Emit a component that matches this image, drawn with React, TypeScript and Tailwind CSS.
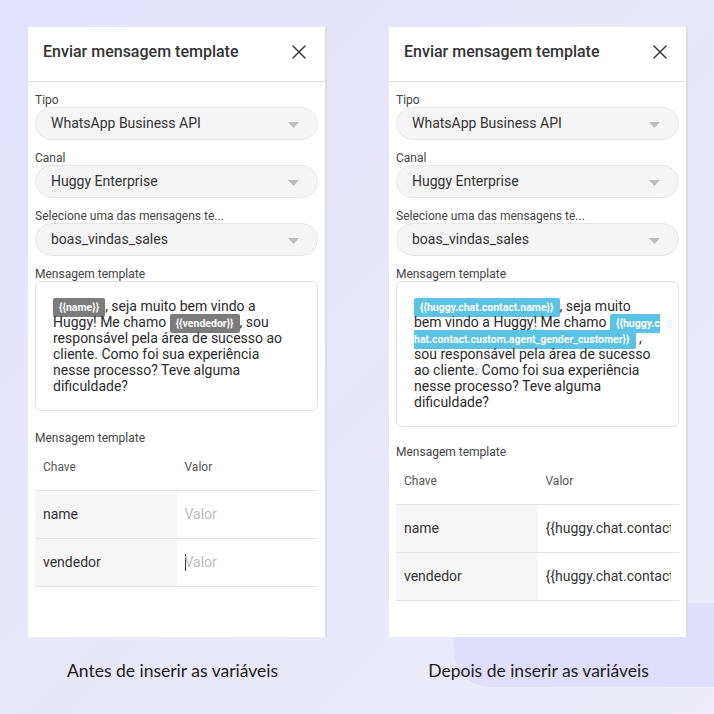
import React from 'react';

type Variant = 'antes' | 'depois';

const FONT = { fontFamily: 'Roboto, "Noto Sans", Arial, sans-serif' };

function CloseIcon() {
  return (
    <svg width="14" height="14" viewBox="0 0 14 14" fill="none">
      <path d="M1 1L13 13M13 1L1 13" stroke="#3a3a3a" strokeWidth="1.5" strokeLinecap="round" />
    </svg>
  );
}

function SelectField({ label, value }: { label: string; value: string }) {
  return (
    <div className="flex flex-col">
      <span className="text-[12px] leading-[12px] text-[#444] mb-[1px]">{label}</span>
      <div className="h-[33px] rounded-full border border-[#e6e6e6] bg-[#f5f5f5] flex items-center justify-between pl-[15px] pr-[18px]">
        <span className="text-[14px] text-[#333]">{value}</span>
        <svg width="11" height="6" viewBox="0 0 11 6" className="mt-[3px]">
          <path d="M0 0H11L5.5 6Z" fill="#bdbdbd" />
        </svg>
      </div>
    </div>
  );
}

function Chip({ children, blue }: { children: React.ReactNode; blue?: boolean }) {
  return (
    <span
      className={
        blue
          ? 'bg-[#5bc3e3] text-white text-[10.5px] leading-[10px] font-bold px-[6px] py-[3px] rounded-[2px] break-all'
          : 'bg-[#7b7b7b] text-white text-[10.5px] leading-[10px] font-bold px-[6px] py-[3px] rounded-[2px]'
      }
    >
      {children}
    </span>
  );
}

function Panel({ variant }: { variant: Variant }) {
  const depois = variant === 'depois';
  const linhas = [
    { chave: 'name', valor: '{{huggy.chat.contact.name}}' },
    { chave: 'vendedor', valor: '{{huggy.chat.contact.custom.agent_gender_customer}}' },
  ];

  return (
    <div className="w-[299px] h-[610px] bg-white border-r-2 border-[#dcdcdc] flex flex-col" style={FONT}>
      <div className="h-[55px] flex items-center justify-between pl-[15px] pr-[19px] pb-[4px] border-b border-[#e0e0e0] shrink-0">
        <span className="text-[16px] font-medium text-[#333]">Enviar mensagem template</span>
        <CloseIcon />
      </div>

      <div className="px-[7px] pt-[12px] flex flex-col gap-[12px]">
        <SelectField label="Tipo" value="WhatsApp Business API" />
        <SelectField label="Canal" value="Huggy Enterprise" />
        <SelectField label="Selecione uma das mensagens te..." value="boas_vindas_sales" />

        <div className="flex flex-col">
          <span className="text-[12px] leading-[12px] text-[#444] mb-[1px]">Mensagem template</span>
          <div className="border border-[#e3e3e3] rounded-[6px] pl-[17px] py-4">
            <p className={depois ? 'w-[248px] text-[14px] leading-[16px] text-[#2b2b2b]' : 'w-[241px] text-[14px] leading-[16px] text-[#2b2b2b]'}>
              {depois ? (
                <>
                  <Chip blue>{'{{huggy.chat.contact.name}}'}</Chip>, seja muito
                  <br />
                  bem vindo a Huggy! Me chamo{' '}
                  <Chip blue>{'{{huggy.chat.contact.custom.agent_gender_customer}}'}</Chip> , sou responsável pela
                  área de sucesso ao cliente. Como foi sua experiência nesse processo? Teve alguma dificuldade?
                </>
              ) : (
                <>
                  <Chip>{'{{name}}'}</Chip>, seja muito bem vindo a Huggy! Me chamo <Chip>{'{{vendedor}}'}</Chip>, sou
                  responsável pela área de sucesso ao cliente. Como foi sua experiência nesse processo? Teve alguma
                  dificuldade?
                </>
              )}
            </p>
          </div>
        </div>

        <div className={depois ? 'flex flex-col mt-[7px]' : 'flex flex-col mt-[9px]'}>
          <span className="text-[12px] leading-[12px] text-[#444]">Mensagem template</span>
          <div className="grid grid-cols-2 h-[47px] items-center border-b border-[#e3e3e3] text-[12px] text-[#555]">
            <span className="pl-2">Chave</span>
            <span className="pl-2">Valor</span>
          </div>
          {linhas.map((l, i) => (
            <div key={l.chave} className="grid grid-cols-2 h-[48px] border-b border-[#e3e3e3] text-[14px]">
              <div className="bg-[#f6f6f6] flex items-center pl-2 text-[#333]">{l.chave}</div>
              <div className="flex items-center pl-2 pr-[8px] min-w-0">
                <div className="overflow-hidden whitespace-nowrap min-w-0">
                  {depois ? (
                    <span className="text-[#333]">{l.valor}</span>
                  ) : (
                    <span className="text-[#bdbdbd] flex items-center">
                      {i === 1 && <span className="w-px h-[17px] bg-[#333] -mr-px" />}
                      Valor
                    </span>
                  )}
                </div>
              </div>
            </div>
          ))}
        </div>
      </div>
    </div>
  );
}

export default function App() {
  return (
    <div className="relative w-[714px] h-[714px] overflow-hidden bg-gradient-to-br from-[#e3e2fd] to-[#edecf8]">
      {/* mancha decorativa do fundo */}
      <div className="absolute left-[454px] top-[603px] w-[300px] h-[84px] rounded-l-[36px] bg-[#dfdefb]" />

      <div className="relative flex gap-[62px] pl-[28px] pt-[27px]">
        <div className="flex flex-col items-center">
          <Panel variant="antes" />
          <span
            className="mt-[24px] mr-[10px] text-[17.5px] leading-[20px] text-[#1c1c1c]"
            style={{ fontFamily: 'Lato, "Noto Sans", sans-serif' }}
          >
            Antes de inserir as variáveis
          </span>
        </div>
        <div className="flex flex-col items-center">
          <Panel variant="depois" />
          <span
            className="mt-[24px] text-[17.5px] leading-[20px] text-[#1c1c1c]"
            style={{ fontFamily: 'Lato, "Noto Sans", sans-serif' }}
          >
            Depois de inserir as variáveis
          </span>
        </div>
      </div>
    </div>
  );
}
